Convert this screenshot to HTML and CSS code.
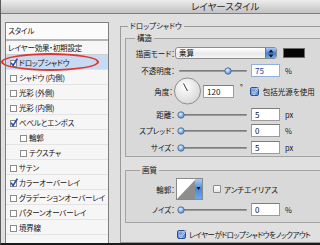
FILE: index.html
```html
<!DOCTYPE html>
<html lang="ja">
<head>
    <meta charset="UTF-8">
    <title>レイヤースタイル</title>
    <link rel="stylesheet" href="styles.css">
</head>
<body>
    <svg class="defs" width="0" height="0">
        <defs>
            <linearGradient id="aqua" x1="0" y1="0" x2="0" y2="1">
                <stop offset="0" stop-color="#a9cdf6"/>
                <stop offset="0.5" stop-color="#4a88dc"/>
                <stop offset="1" stop-color="#6fa8ec"/>
            </linearGradient>
            <radialGradient id="knob" cx="0.4" cy="0.35" r="0.7">
                <stop offset="0" stop-color="#e4f0fd"/>
                <stop offset="1" stop-color="#4d87d3"/>
            </radialGradient>
            <radialGradient id="dial" cx="0.4" cy="0.35" r="0.75">
                <stop offset="0" stop-color="#ffffff"/>
                <stop offset="1" stop-color="#d2d2d2"/>
            </radialGradient>
        </defs>
    </svg>

    <div class="dialog">
        <div class="titlebar">レイヤースタイル</div>
        <div class="main">
            <div class="styles">
                <div class="styles-head">スタイル</div>
                <div class="styles-row first">レイヤー効果・初期設定</div>
                <div class="styles-row selected">
                    <svg class="tick" viewBox="0 0 9 9"><rect x="1.5" y="2.5" width="6" height="6" fill="#fff" stroke="#8c8c8c"/><path d="M2.2 4.8 L4 7.6 L8.4 0.6" fill="none" stroke="#2451b4" stroke-width="1.6"/></svg>ドロップシャドウ
                </div>
                <div class="styles-row">
                    <svg class="tick" viewBox="0 0 9 9"><rect x="1.5" y="2.5" width="6" height="6" fill="#fff" stroke="#8c8c8c"/></svg>シャドウ (内側)
                </div>
                <div class="styles-row">
                    <svg class="tick" viewBox="0 0 9 9"><rect x="1.5" y="2.5" width="6" height="6" fill="#fff" stroke="#8c8c8c"/></svg>光彩 (外側)
                </div>
                <div class="styles-row">
                    <svg class="tick" viewBox="0 0 9 9"><rect x="1.5" y="2.5" width="6" height="6" fill="#fff" stroke="#8c8c8c"/></svg>光彩 (内側)
                </div>
                <div class="styles-row">
                    <svg class="tick" viewBox="0 0 9 9"><rect x="1.5" y="2.5" width="6" height="6" fill="#fff" stroke="#8c8c8c"/><path d="M2.2 4.8 L4 7.6 L8.4 0.6" fill="none" stroke="#2451b4" stroke-width="1.6"/></svg>ベベルとエンボス
                </div>
                <div class="styles-row sub">
                    <svg class="tick" viewBox="0 0 9 9"><rect x="1.5" y="2.5" width="6" height="6" fill="#fff" stroke="#8c8c8c"/></svg>輪郭
                </div>
                <div class="styles-row sub">
                    <svg class="tick" viewBox="0 0 9 9"><rect x="1.5" y="2.5" width="6" height="6" fill="#fff" stroke="#8c8c8c"/></svg>テクスチャ
                </div>
                <div class="styles-row">
                    <svg class="tick" viewBox="0 0 9 9"><rect x="1.5" y="2.5" width="6" height="6" fill="#fff" stroke="#8c8c8c"/></svg>サテン
                </div>
                <div class="styles-row">
                    <svg class="tick" viewBox="0 0 9 9"><rect x="1.5" y="2.5" width="6" height="6" fill="#fff" stroke="#8c8c8c"/><path d="M2.2 4.8 L4 7.6 L8.4 0.6" fill="none" stroke="#2451b4" stroke-width="1.6"/></svg>カラーオーバーレイ
                </div>
                <div class="styles-row">
                    <svg class="tick" viewBox="0 0 9 9"><rect x="1.5" y="2.5" width="6" height="6" fill="#fff" stroke="#8c8c8c"/></svg>グラデーションオーバーレイ
                </div>
                <div class="styles-row">
                    <svg class="tick" viewBox="0 0 9 9"><rect x="1.5" y="2.5" width="6" height="6" fill="#fff" stroke="#8c8c8c"/></svg>パターンオーバーレイ
                </div>
                <div class="styles-row">
                    <svg class="tick" viewBox="0 0 9 9"><rect x="1.5" y="2.5" width="6" height="6" fill="#fff" stroke="#8c8c8c"/></svg>境界線
                </div>
            </div>

            <fieldset class="group outer">
                <legend>ドロップシャドウ</legend>

                <fieldset class="group structure">
                    <legend>構造</legend>
                    <div class="row r-mode">
                        <label class="lbl">描画モード：</label>
                        <div class="popup">
                            <span class="popup-text">乗算</span>
                            <span class="popup-arrows">
                                <svg width="6" height="9" viewBox="0 0 6 9"><path d="M3 0.5 L5.5 3.5 H0.5z M3 8.5 L5.5 5.5 H0.5z" fill="#111"/></svg>
                            </span>
                        </div>
                        <span class="swatch"></span>
                    </div>
                    <div class="row r-opacity">
                        <label class="lbl">不透明度：</label>
                        <div class="slider" style="--v:75"><svg class="knob" width="8" height="8" viewBox="0 0 8 8"><circle cx="4" cy="4" r="3.2" fill="url(#knob)" stroke="#4a6c9e" stroke-width="0.9"/></svg></div>
                        <input class="field active" type="text" value="75">
                        <span class="unit">%</span>
                    </div>
                    <div class="row r-angle">
                        <label class="lbl">角度：</label>
                        <svg class="dial" width="29" height="28" viewBox="0 0 29 28"><circle cx="14.5" cy="14" r="13" fill="url(#dial)" stroke="#8d8d8d"/><line x1="14.5" y1="14" x2="10.5" y2="6.5" stroke="#3a3a3a" stroke-width="1"/></svg>
                        <input class="field wide" type="text" value="120">
                        <span class="deg">°</span>
                        <svg class="aqua" width="10" height="10" viewBox="0 0 10 10"><rect x="0.5" y="1.5" width="8" height="8" rx="1.5" fill="url(#aqua)" stroke="#2f4f86"/><path d="M2 5.2 L4 7.8 L9.2 0.8" fill="none" stroke="#fff" stroke-width="1.7"/><path d="M2 5.2 L4 7.8 L9.2 0.8" fill="none" stroke="#0d2a66" stroke-width="0.6"/></svg>
                        <span class="check-text">包括光源を使用</span>
                    </div>
                    <div class="row r-distance">
                        <label class="lbl">距離：</label>
                        <div class="slider" style="--v:0"><svg class="knob" width="8" height="8" viewBox="0 0 8 8"><circle cx="4" cy="4" r="3.2" fill="url(#knob)" stroke="#4a6c9e" stroke-width="0.9"/></svg></div>
                        <input class="field" type="text" value="5">
                        <span class="unit">px</span>
                    </div>
                    <div class="row r-spread">
                        <label class="lbl">スプレッド：</label>
                        <div class="slider" style="--v:0"><svg class="knob" width="8" height="8" viewBox="0 0 8 8"><circle cx="4" cy="4" r="3.2" fill="url(#knob)" stroke="#4a6c9e" stroke-width="0.9"/></svg></div>
                        <input class="field" type="text" value="0">
                        <span class="unit">%</span>
                    </div>
                    <div class="row r-size">
                        <label class="lbl">サイズ：</label>
                        <div class="slider" style="--v:0"><svg class="knob" width="8" height="8" viewBox="0 0 8 8"><circle cx="4" cy="4" r="3.2" fill="url(#knob)" stroke="#4a6c9e" stroke-width="0.9"/></svg></div>
                        <input class="field" type="text" value="5">
                        <span class="unit">px</span>
                    </div>
                </fieldset>

                <fieldset class="group quality">
                    <legend>画質</legend>
                    <div class="row r-contour">
                        <label class="lbl">輪郭：</label>
                        <svg class="contour" width="27" height="22" viewBox="0 0 27 22"><rect x="0.5" y="0.5" width="26" height="21" fill="#fff" stroke="#8a8a8a"/><polygon points="1,21 19,2 19,21" fill="#8e8e8e"/><rect x="19" y="1" width="7" height="20" fill="url(#aqua)"/><path d="M20.5 9 H24.5 L22.5 12z" fill="#111"/></svg>
                        <span class="box-empty"></span>
                        <span class="check-text">アンチエイリアス</span>
                    </div>
                    <div class="row r-noise">
                        <label class="lbl">ノイズ：</label>
                        <div class="slider" style="--v:0"><svg class="knob" width="8" height="8" viewBox="0 0 8 8"><circle cx="4" cy="4" r="3.2" fill="url(#knob)" stroke="#4a6c9e" stroke-width="0.9"/></svg></div>
                        <input class="field" type="text" value="0">
                        <span class="unit">%</span>
                    </div>
                </fieldset>

                <div class="row r-knockout">
                    <svg class="aqua" width="10" height="10" viewBox="0 0 10 10"><rect x="0.5" y="1.5" width="8" height="8" rx="1.5" fill="url(#aqua)" stroke="#2f4f86"/><path d="M2 5.2 L4 7.8 L9.2 0.8" fill="none" stroke="#fff" stroke-width="1.7"/><path d="M2 5.2 L4 7.8 L9.2 0.8" fill="none" stroke="#0d2a66" stroke-width="0.6"/></svg>
                    <span class="check-text">レイヤーがドロップシャドウをノックアウト</span>
                </div>
            </fieldset>
        </div>

        <div class="mark"></div>
    </div>
</body>
</html>
```

FILE: styles.css
```css
body {
    margin: 0;
    font-family: "Noto Sans CJK JP", "Noto Sans", sans-serif;
    font-size: 7.5px;
    font-feature-settings: "palt";
    color: #151515;
    background: #dcdcdc;
    overflow: hidden;
}
.defs {
    position: absolute;
}
.dialog {
    position: relative;
    width: 320px;
    height: 245px;
    box-sizing: border-box;
    border-left: 1px solid #5c5c5c;
    border-bottom: 2px solid #1b1b1b;
    background: #e0e0e0;
    overflow: hidden;
}
.titlebar {
    height: 13px;
    line-height: 13px;
    padding-left: 190px;
    font-size: 9.5px;
    color: #2a2a2a;
    background: linear-gradient(#ececec, #c2c2c2);
    border-bottom: 1px solid #7e7e7e;
}
.main {
    display: flex;
    height: 229px;
}

/* styles list */
.styles {
    flex: none;
    width: 104px;
    box-sizing: border-box;
    margin: 8px 0 0 4px;
    border: 1px solid #7f7f7f;
    border-bottom: none;
    background: #f6f6f6;
    letter-spacing: -0.2px;
}
.styles-head {
    height: 16px;
    line-height: 16px;
    padding-left: 2px;
    border-bottom: 2px solid #b4b4b4;
    background: #fbfbfb;
}
.styles-row {
    display: flex;
    align-items: center;
    height: 14px;
    padding-left: 3px;
    border-bottom: 1px solid #e3e3e3;
    white-space: nowrap;
}
.styles-row.first {
    height: 13px;
    padding-left: 2px;
    border-bottom-color: #cfcfcf;
}
.styles-row.selected {
    background: #c6daf4;
}
.styles-row.sub {
    padding-left: 13px;
}
.tick {
    width: 9px;
    height: 9px;
    margin-right: 1px;
    flex: none;
}
.mark {
    position: absolute;
    left: 0;
    top: 53px;
    width: 98px;
    height: 18px;
    box-sizing: border-box;
    border: 2px solid #e2352b;
    border-radius: 50%;
}

/* group boxes */
.group {
    margin: 0;
    border: 1px solid #a3a3a3;
    min-width: 0;
}
.group legend {
    padding: 0 2px;
    line-height: 10px;
}
.outer {
    flex: none;
    align-self: flex-start;
    width: 215px;
    margin: 7px 0 0 11px;
    padding: 0 0 3px 4px;
    border-color: #9a9a9a;
}
.outer > legend {
    margin-left: 3px;
}
.structure {
    margin-top: 2px;
    padding: 0 0 2px 0;
    background: #d9d9d9;
}
.structure > legend {
    margin-left: 9px;
}
.quality {
    margin-top: 8px;
    padding: 0 0 6px 0;
    background: #d9d9d9;
}
.quality > legend {
    margin-left: 14px;
}

/* rows */
.row {
    display: flex;
    align-items: center;
    white-space: nowrap;
}
.lbl {
    flex: none;
    width: 49px;
    text-align: right;
}
.r-mode {
    margin-top: 4px;
    height: 12px;
}
.r-opacity {
    margin-top: 5px;
    height: 13px;
}
.r-angle {
    height: 28px;
}
.r-angle .lbl {
    width: 47px;
}
.r-distance,
.r-spread {
    margin-top: 3px;
    height: 13px;
}
.r-size {
    margin-top: 4px;
    height: 13px;
}
.r-contour {
    margin-top: 3px;
    height: 22px;
}
.r-noise {
    margin-top: 3px;
    height: 13px;
}
.r-knockout {
    margin-top: 6px;
    height: 10px;
    padding-left: 52px;
}

/* controls */
.popup {
    display: flex;
    width: 102px;
    height: 12px;
    box-sizing: border-box;
    border: 1px solid #8c8c8c;
    border-radius: 3px;
    background: linear-gradient(#ffffff, #e9e9e9 60%, #f6f6f6);
    overflow: hidden;
}
.popup-text {
    flex: 1;
    padding-left: 3px;
    line-height: 10px;
}
.popup-arrows {
    display: flex;
    align-items: center;
    justify-content: center;
    width: 10px;
    border-left: 1px solid #5a7aa8;
    background: linear-gradient(#a6cbf5, #3f7fd8 55%, #73adee);
}
.swatch {
    width: 22px;
    height: 10px;
    margin-left: 6px;
    box-sizing: border-box;
    border: 1px solid #6a6a6a;
    background: #050505;
}
.slider {
    position: relative;
    flex: none;
    width: 70px;
    height: 13px;
    margin-left: 2px;
}
.slider::before {
    content: "";
    position: absolute;
    left: 2px;
    right: 0;
    top: 6px;
    height: 2px;
    background: linear-gradient(#6f6f6f, #a8a8a8);
    border-radius: 1px;
}
.knob {
    position: absolute;
    top: 3px;
    left: calc(var(--v) * 0.62px);
}
.field {
    width: 29px;
    height: 13px;
    margin: 0 0 0 4px;
    padding: 0 0 0 3px;
    box-sizing: border-box;
    border: 1px solid #9c9c9c;
    border-top-color: #7c7c7c;
    background: #fff;
    font: inherit;
    font-size: 8px;
    line-height: 11px;
    color: #151515;
    outline: none;
}
.field.active {
    border-color: #8fb1dd;
    color: #1f3f96;
}
.field.wide {
    width: 31px;
    margin-left: 1px;
}
.unit {
    margin-left: 5px;
}
.deg {
    align-self: flex-start;
    margin: 6px 0 0 6px;
    line-height: 8px;
}
.aqua {
    flex: none;
    margin-left: 7px;
}
.check-text {
    margin-left: 3px;
}
.contour {
    flex: none;
    margin-left: 1px;
}
.box-empty {
    width: 8px;
    height: 8px;
    margin-left: 10px;
    box-sizing: border-box;
    border: 1px solid #8a8a8a;
    border-radius: 1px;
    background: linear-gradient(#ffffff, #e6e6e6);
}
.r-knockout .aqua {
    margin-left: 0;
}
.r-knockout .check-text {
    margin-left: 2px;
    letter-spacing: -0.5px;
}
```
